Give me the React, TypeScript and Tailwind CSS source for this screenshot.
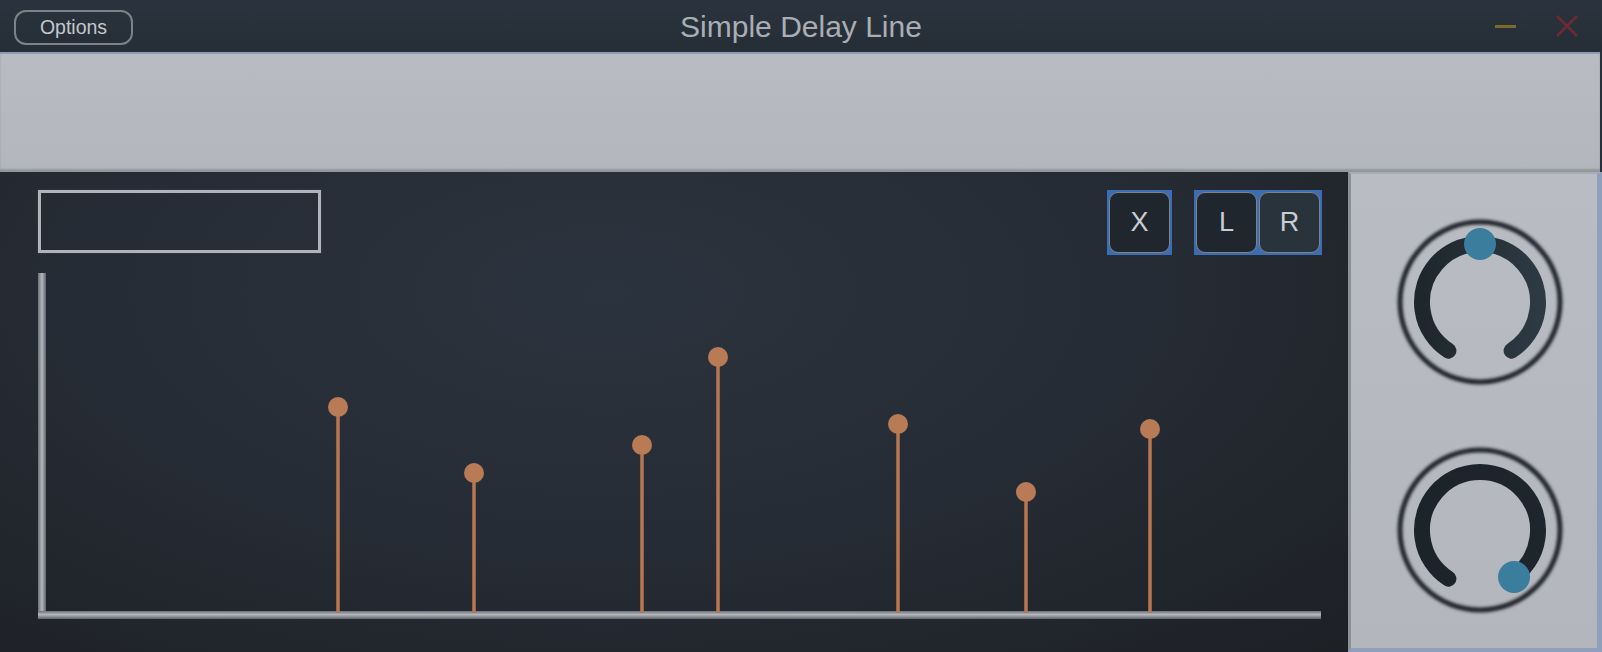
import React from "react";

const font = { fontFamily: '"Liberation Sans", Arial, sans-serif' };

// chart area starts at x=38, y=266 in page coordinates
const taps = [
  { x: 300, y: 139 },
  { x: 436, y: 205 },
  { x: 604, y: 177 },
  { x: 680, y: 89 },
  { x: 860, y: 156 },
  { x: 988, y: 224 },
  { x: 1112, y: 161 },
];

function Chart() {
  return (
    <svg width={1286} height={354} className="block">
      <defs>
        <linearGradient id="axisH" x1="0" y1="0" x2="0" y2="1">
          <stop offset="0" stopColor="#6d7278" />
          <stop offset="0.45" stopColor="#b4b7bc" />
          <stop offset="1" stopColor="#5f646a" />
        </linearGradient>
        <linearGradient id="axisV" x1="0" y1="0" x2="1" y2="0">
          <stop offset="0" stopColor="#6d7278" />
          <stop offset="0.5" stopColor="#b4b7bc" />
          <stop offset="1" stopColor="#5f646a" />
        </linearGradient>
      </defs>
      <rect x={0} y={5} width={8} height={346} fill="url(#axisV)" />
      <rect x={0} y={343} width={1283} height={8} fill="url(#axisH)" />
      {taps.map((t, i) => (
        <g key={i}>
          <line x1={t.x} y1={t.y} x2={t.x} y2={345} stroke="#b97652" strokeWidth={3.5} />
          <circle cx={t.x} cy={t.y} r={10} fill="#b97a56" />
        </g>
      ))}
    </svg>
  );
}

function polar(r: number, deg: number) {
  const a = (deg * Math.PI) / 180;
  return { x: 90 + r * Math.sin(a), y: 90 - r * Math.cos(a) };
}

function Knob({ value, gradient }: { value: number; gradient?: boolean }) {
  const r = 58;
  const start = polar(r, -147);
  const end = polar(r, 147);
  const angle = -147 + value * 294;
  const thumb = polar(r, angle);
  const id = gradient ? "arcA" : "arcB";
  return (
    <svg width={180} height={180} className="block">
      <defs>
        <filter id={`blur-${id}`} x="-20%" y="-20%" width="140%" height="140%">
          <feGaussianBlur stdDeviation="1.8" />
        </filter>
        <linearGradient id={id} x1="0" y1="0" x2="1" y2="0">
          <stop offset="0" stopColor={gradient ? "#1f262d" : "#1d232a"} />
          <stop offset="1" stopColor={gradient ? "#2d3943" : "#1f252c"} />
        </linearGradient>
      </defs>
      <circle cx={90} cy={90} r={80} fill="none" stroke="#23272d" strokeWidth={5} filter={`url(#blur-${id})`} />
      <path
        d={`M ${start.x} ${start.y} A ${r} ${r} 0 1 1 ${end.x} ${end.y}`}
        fill="none"
        stroke={`url(#${id})`}
        strokeWidth={16}
        strokeLinecap="round"
      />
      <circle cx={thumb.x} cy={thumb.y} r={16} fill="#3a7d9c" />
    </svg>
  );
}

function ToggleBox({ label, light }: { label: string; light?: boolean }) {
  return (
    <div
      className={`w-[61px] h-[61px] rounded-[9px] border-[1.5px] border-[#7c838b] flex items-center justify-center text-[27px] text-[#c9cdd3] ${
        light ? "bg-[#29333c]" : "bg-[#20262d]"
      }`}
    >
      {label}
    </div>
  );
}

export default function App() {
  return (
    <div className="w-[1602px] h-[652px] overflow-hidden bg-[#28313b] flex flex-col" style={font}>
      {/* title bar */}
      <div className="h-[52px] shrink-0 relative flex items-center bg-gradient-to-b from-[#2b343e] to-[#252d36]">
        <button className="ml-[14px] mt-[3px] w-[119px] h-[35px] rounded-[12px] border-2 border-[#7b828a] text-[19.5px] text-[#c3c7cd] leading-none">
          Options
        </button>
        <div className="absolute inset-x-0 top-0 h-[52px] flex items-center justify-center text-[30px] text-[#aaaeb4] pointer-events-none">
          Simple Delay Line
        </div>
        <div className="ml-auto flex items-center gap-[40px] mr-[24px]">
          <div className="w-[21px] h-[3px] bg-[#7a6a2e]" />
          <svg width={22} height={22} viewBox="0 0 22 22">
            <path d="M1 1 L21 21 M21 1 L1 21" stroke="#6e2b35" strokeWidth={2.5} />
          </svg>
        </div>
      </div>

      {/* grey band */}
      <div className="h-[120px] shrink-0 w-[1600px] bg-gradient-to-b from-[#b8bbc2] to-[#b3b6bc] border-t-2 border-[#8e9bb0] shadow-[inset_0_-3px_2px_rgba(0,0,0,0.18)]" />

      {/* content row */}
      <div className="flex flex-1 min-h-0">
        <div className="w-[1348px] shrink-0 bg-[radial-gradient(ellipse_at_45%_25%,#2b333e_0%,#262c35_50%,#1d2025_100%)] pl-[38px] pr-[26px] pt-[18px]">
          <div className="flex items-start justify-between">
            <div className="w-[283px] h-[63px] border-[3px] border-[#b0b4ba] shadow-[0_0_1px_#5c6168]" />
            <div className="flex gap-[22px]">
              <div className="bg-[#3c6db3] p-[2px]">
                <ToggleBox label="X" />
              </div>
              <div className="bg-[#3c6db3] p-[2px] flex gap-[2px]">
                <ToggleBox label="L" />
                <ToggleBox label="R" light />
              </div>
            </div>
          </div>
          <div className="mt-[13px]">
            <Chart />
          </div>
        </div>
        <div className="flex-1 bg-gradient-to-b from-[#b9bcc3] to-[#b3b6bc] border-l-[3px] border-l-[#8b9098] border-r-[5px] border-r-[#8ea0bb] border-b-4 border-b-[#8ea0bb] border-t-2 border-t-[#a6adb8] flex flex-col pl-[39px] pt-[38px] gap-[48px]">
          <Knob value={0.5} gradient />
          <Knob value={0.99} />
        </div>
      </div>
    </div>
  );
}
